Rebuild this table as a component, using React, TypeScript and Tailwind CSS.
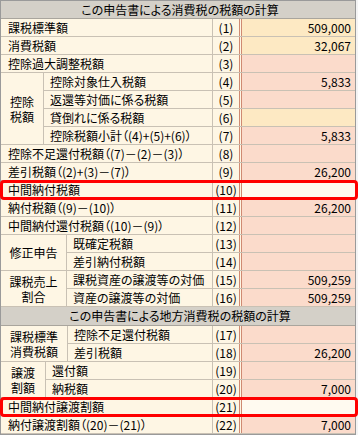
import React from "react";

type Bg = "y" | "p" | "c";

const bgClass: Record<Bg, string> = {
  y: "bg-[#fde9c3]",
  p: "bg-[#fbdbcb]",
  c: "bg-[#fffaf0]",
};

function Cells({
  num,
  value,
  bg,
}: {
  num: string;
  value?: string;
  bg: Bg;
}) {
  return (
    <>
      <div className="w-[29px] shrink-0 flex items-center justify-center border-r-[3px] border-double border-[#cf8a72] bg-[#fef6e4]">
        {num}
      </div>
      <div
        className={`flex-1 flex items-center justify-end pr-[4px] ${bgClass[bg]}`}
      >
        {value}
      </div>
    </>
  );
}

function Row({
  label,
  num,
  value,
  bg,
  labelW = 212,
  red = false,
  padL = "pl-[7px]",
}: {
  label: string;
  num: string;
  value?: string;
  bg: Bg;
  labelW?: number;
  red?: boolean;
  padL?: string;
}) {
  return (
    <div className="relative flex h-[18px] border-b border-[#c9c1b4]">
      <div
        className={`shrink-0 flex items-center ${padL} whitespace-nowrap border-r border-[#c9c1b4] bg-[#fef6e4]`}
        style={{ width: labelW }}
      >
        {label}
      </div>
      <Cells num={num} value={value} bg={bg} />
      {red && (
        <div className="pointer-events-none absolute -top-px -bottom-[2px] -left-px -right-[3px] z-10 rounded-[4px] border-[3px] border-[#ff0000]" />
      )}
    </div>
  );
}

function Group({
  title,
  width,
  rows,
}: {
  title: React.ReactNode;
  width: number;
  rows: { label: string; num: string; value?: string; bg: Bg }[];
}) {
  return (
    <div className="flex">
      <div
        className="shrink-0 flex flex-col items-center justify-center border-r border-b border-[#c9c1b4] bg-[#fef6e4] leading-[15px]"
        style={{ width }}
      >
        {title}
      </div>
      <div className="flex-1 flex flex-col">
        {rows.map((r) => (
          <Row
            key={r.num}
            label={r.label}
            num={r.num}
            value={r.value}
            bg={r.bg}
            labelW={212 - width}
            padL="pl-[6px]"
          />
        ))}
      </div>
    </div>
  );
}

function Header({ text, h }: { text: string; h: string }) {
  return (
    <div
      className={`${h} flex items-center justify-center border-b border-[#a9a59d] bg-[#d4d0c8] [font-feature-settings:'palt'] pl-[4px]`}
    >
      {text}
    </div>
  );
}

export default function App() {
  return (
    <div className="w-[358px] h-[435px] overflow-hidden bg-[#f4f4f4] font-['Noto_Sans_CJK_JP','Noto_Sans',sans-serif] text-[12px] leading-none text-black">
      <div className="w-[356px] border border-[#9a9a9a] [font-feature-settings:'palt']">
        <Header text="この申告書による消費税の税額の計算" h="h-[18px]" />
        <Row label="課税標準額" num="(1)" value="509,000" bg="y" />
        <Row label="消費税額" num="(2)" value="32,067" bg="y" />
        <Row label="控除過大調整税額" num="(3)" bg="p" />
        <Group
          title={
            <>
              <span>控除</span>
              <span>税額</span>
            </>
          }
          width={43}
          rows={[
            { label: "控除対象仕入税額", num: "(4)", value: "5,833", bg: "p" },
            { label: "返還等対価に係る税額", num: "(5)", bg: "p" },
            { label: "貸倒れに係る税額", num: "(6)", bg: "y" },
            {
              label: "控除税額小計（(4)+(5)+(6)）",
              num: "(7)",
              value: "5,833",
              bg: "p",
            },
          ]}
        />
        <Row label="控除不足還付税額（(7)－(2)－(3)）" num="(8)" bg="p" />
        <Row
          label="差引税額（(2)+(3)－(7)）"
          num="(9)"
          value="26,200"
          bg="p"
        />
        <Row label="中間納付税額" num="(10)" bg="c" red />
        <Row
          label="納付税額（(9)－(10)）"
          num="(11)"
          value="26,200"
          bg="p"
        />
        <Row label="中間納付還付税額（(10)－(9)）" num="(12)" bg="p" />
        <Group
          title={<span>修正申告</span>}
          width={66}
          rows={[
            { label: "既確定税額", num: "(13)", bg: "p" },
            { label: "差引納付税額", num: "(14)", bg: "p" },
          ]}
        />
        <Group
          title={
            <>
              <span>課税売上</span>
              <span>割合</span>
            </>
          }
          width={66}
          rows={[
            {
              label: "課税資産の譲渡等の対価",
              num: "(15)",
              value: "509,259",
              bg: "p",
            },
            {
              label: "資産の譲渡等の対価",
              num: "(16)",
              value: "509,259",
              bg: "p",
            },
          ]}
        />
        <Header
          text="この申告書による地方消費税の税額の計算"
          h="h-[19px]"
        />
        <Group
          title={
            <>
              <span>課税標準</span>
              <span>消費税額</span>
            </>
          }
          width={67}
          rows={[
            { label: "控除不足還付税額", num: "(17)", bg: "p" },
            { label: "差引税額", num: "(18)", value: "26,200", bg: "p" },
          ]}
        />
        <Group
          title={
            <>
              <span>譲渡</span>
              <span>割額</span>
            </>
          }
          width={45}
          rows={[
            { label: "還付額", num: "(19)", bg: "p" },
            { label: "納税額", num: "(20)", value: "7,000", bg: "p" },
          ]}
        />
        <Row label="中間納付譲渡割額" num="(21)" bg="c" red />
        <Row
          label="納付譲渡割額（(20)－(21)）"
          num="(22)"
          value="7,000"
          bg="p"
        />
      </div>
    </div>
  );
}
